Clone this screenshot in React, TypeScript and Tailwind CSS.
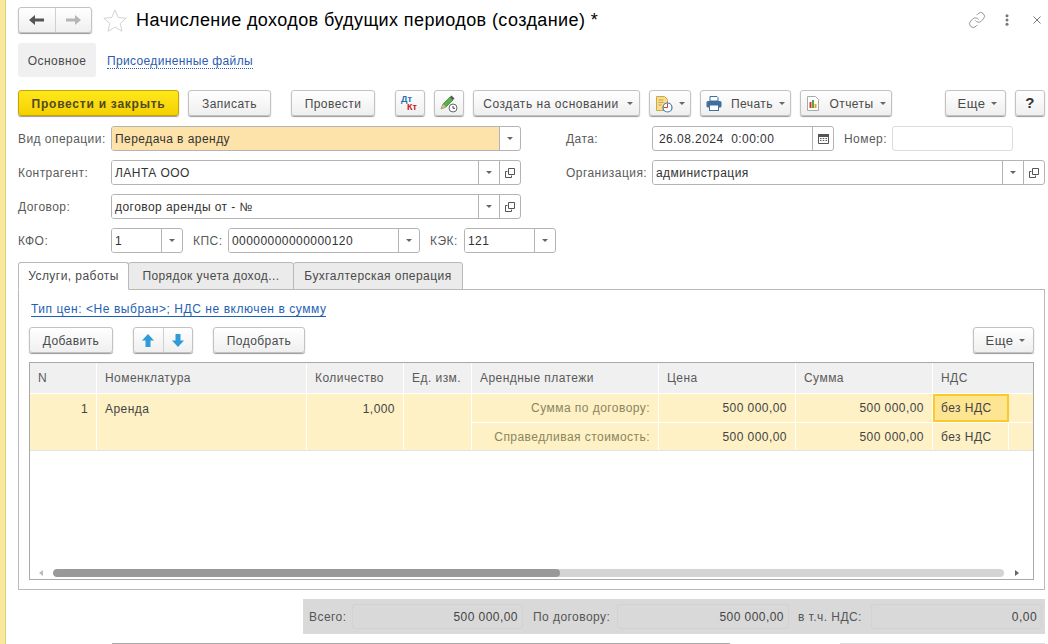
import type { ReactNode } from 'react';
import { Link } from 'lucide-react';

const btn =
    'flex h-[26px] items-center justify-center rounded-[3px] border border-[#c2c2c2] bg-gradient-to-b from-white to-[#efefef] text-[#4a4a4a] shadow-[0_1px_1px_#9a9a9a]';

const Caret = ({ className = '' }: { className?: string }) => (
    <svg width="6" height="3" viewBox="0 0 6 3" className={className}>
        <path d="M0 0h6L3 3z" fill="#666" />
    </svg>
);

const OpenIcon = () => (
    <svg width="10" height="10" viewBox="0 0 10 10" fill="none" stroke="#555">
        <path d="M3.500.5h6v6h-6z" />
        <path d="M2.500 3.500h-2v6h6v-2" />
    </svg>
);

function Btn({ w, children, caret, className = '' }: { w: string; children: ReactNode; caret?: boolean; className?: string }) {
    return (
        <div className={`${btn} ${w} ${className} shrink-0 gap-[6px] pt-[1px]`}>
            {children}
            {caret && <Caret />}
        </div>
    );
}

function Field({
    w,
    value,
    caret,
    open,
    bg = 'bg-white',
}: {
    w: string;
    value: string;
    caret?: boolean;
    open?: boolean;
    bg?: string;
}) {
    return (
        <div className={`flex h-[25px] shrink-0 overflow-hidden rounded-[3px] border border-[#b4b4b4] bg-white ${w}`}>
            <div className={`flex flex-1 items-center pl-[3px] text-[#333] ${bg}`}>{value}</div>
            {caret && (
                <div className="flex w-[21px] items-center justify-center border-l border-[#b4b4b4]">
                    <Caret />
                </div>
            )}
            {open && (
                <div className="flex w-[21px] items-center justify-center border-l border-[#b4b4b4]">
                    <OpenIcon />
                </div>
            )}
        </div>
    );
}

const Label = ({ w, children }: { w: string; children: ReactNode }) => (
    <div className={`flex h-[25px] shrink-0 items-center text-[#5a5a5a] ${w}`}>{children}</div>
);

const headers = ['N', 'Номенклатура', 'Количество', 'Ед. изм.', 'Арендные платежи', 'Цена', 'Сумма', 'НДС'];
const rowBg = 'bg-[#fdf1c5]';

function Tab({ w, active, children }: { w: string; active?: boolean; children: ReactNode }) {
    return (
        <div
            className={`flex h-[28px] shrink-0 items-center justify-center rounded-t-[3px] border border-[#b9b9b9] ${w} ${
                active ? 'z-10 border-b-white bg-white text-[#4a4a4a]' : 'ml-[-1px] bg-[#ebebeb] text-[#4a4a4a]'
            }`}
        >
            {children}
        </div>
    );
}

function Total({ label, labelW, w, value }: { label: string; labelW: string; w: string; value: string }) {
    return (
        <>
            <div className={`shrink-0 text-[#555] ${labelW}`}>{label}</div>
            <div className={`flex h-[25px] shrink-0 items-center justify-end rounded-[3px] border border-[#d2d2d2] pr-[4px] text-[#444] ${w}`}>
                {value}
            </div>
        </>
    );
}

export default function App() {
    return (
        <div className="flex h-[644px] w-[1048px] overflow-hidden bg-white text-[12px] tracking-[0.45px] [font-family:'Liberation_Sans',Arial,sans-serif]">
            <div className="w-[6px] shrink-0 border-r border-[#e0cf80] bg-[#fbe99b]" />
            <div className="flex w-[1039px] shrink-0 flex-col pl-[12px] pt-[8px]">
                {/* header */}
                <div className="flex h-[24px] items-center">
                    <div className={`${btn} h-[24px] w-[74px]`}>
                        <div className="flex h-full flex-1 items-center justify-center border-r border-[#d0d0d0]">
                            <svg width="15" height="10" viewBox="0 0 15 10">
                                <path d="M0 5l6-5v3.500h9v3H6V10z" fill="#555" />
                            </svg>
                        </div>
                        <div className="flex h-full flex-1 items-center justify-center">
                            <svg width="15" height="10" viewBox="0 0 15 10">
                                <path d="M15 5L9 0v3.500H0v3h9V10z" fill="#b5b5b5" />
                            </svg>
                        </div>
                    </div>
                    <svg width="24" height="23" viewBox="0 0 24 23" className="ml-[11px]" fill="none" stroke="#d2d2d2">
                        <path d="M12 1l3.200 7.500 8 .700-6 5.300 1.800 7.800-7-4.200-7 4.200 1.800-7.800-6-5.300 8-.700z" />
                    </svg>
                    <div className="ml-[9px] pt-[1px] text-[18px] tracking-[0.4px] text-black">Начисление доходов будущих периодов (создание) *</div>
                    <div className="ml-auto flex items-center">
                        <Link size={18} strokeWidth={1} color="#777" />
                        <svg width="4" height="12" viewBox="0 0 4 12" className="ml-[19px]">
                            <circle cx="2" cy="1.800" r="1.500" fill="#777" />
                            <circle cx="2" cy="6" r="1.500" fill="#777" />
                            <circle cx="2" cy="10.200" r="1.500" fill="#777" />
                        </svg>
                        <svg width="8" height="8" viewBox="0 0 8 8" className="mb-[1px] ml-[24px] mr-[4px]" stroke="#777">
                            <path d="M.5.500l7 7M7.500.500l-7 7" />
                        </svg>
                    </div>
                </div>

                {/* page tabs */}
                <div className="mt-[11px] flex h-[34px] items-center">
                    <div className="flex h-full w-[78px] items-center justify-center rounded-[3px] bg-[#f0f0f0] pt-[1px] text-[#4a4a4a]">Основное</div>
                    <div className="ml-[11px] mt-[2px] border-b border-dotted border-[#2a5db0] leading-[14px] tracking-[0.35px] text-[#2a5db0]">Присоединенные файлы</div>
                </div>

                {/* command bar */}
                <div className="mt-[13px] flex h-[26px] items-center">
                    <div className="flex h-[26px] w-[161px] shrink-0 items-center justify-center rounded-[3px] border border-[#c4a600] bg-gradient-to-b from-[#ffe81a] to-[#f6d000] pt-[1px] font-bold tracking-[0.75px] text-[#4f4a20] shadow-[0_1px_1px_#9a9a9a]">
                        Провести и закрыть
                    </div>
                    <Btn w="w-[83px]" className="ml-[9px]">Записать</Btn>
                    <Btn w="w-[84px]" className="ml-[20px]">Провести</Btn>
                    <Btn w="w-[30px]" className="ml-[20px]">
                        <div className="relative h-[18px] w-[20px] text-[9px] font-bold leading-[9px] tracking-normal">
                            <span className="absolute left-[1px] top-0 text-[#2a6fb0]">Дт</span>
                            <span className="absolute left-[7px] top-[8px] text-[#c4161c]">Кт</span>
                        </div>
                    </Btn>
                    <Btn w="w-[30px]" className="ml-[9px]">
                        <svg width="18" height="18" viewBox="0 0 18 18">
                            <path d="M1 14l2-5 7-7 3 3-7 7z" fill="#58b04a" stroke="#3c7a34" strokeWidth="0.700" />
                            <path d="M1 14l2-5 3 3z" fill="#d9b98a" />
                            <path d="M10 2l1.500-1.500 3 3L13 5z" fill="#555" />
                            <circle cx="13" cy="13" r="4" fill="#fff" stroke="#667" />
                            <path d="M13 11v2.300h2" fill="none" stroke="#444" />
                        </svg>
                    </Btn>
                    <Btn w="w-[167px]" caret className="ml-[9px] !gap-[8px] pl-[3px] tracking-[0.55px]">Создать на основании</Btn>
                    <Btn w="w-[42px]" caret className="ml-[9px]">
                        <svg width="18" height="18" viewBox="0 0 18 18">
                            <path d="M1.500 1.500h8l3 3v11h-11z" fill="#f6dc8c" stroke="#cda94e" />
                            <path d="M3.500 5h5M3.500 7.500h5M3.500 10h3" stroke="#c9a646" />
                            <circle cx="12.500" cy="12.500" r="4.500" fill="#fff" stroke="#3a78b5" strokeWidth="1.200" />
                            <path d="M12.500 8.500v4h-4" fill="none" stroke="#d43c3c" />
                        </svg>
                    </Btn>
                    <Btn w="w-[91px]" caret className="ml-[9px]">
                        <svg width="16" height="15" viewBox="0 0 16 15" className="mr-[3px]">
                            <path d="M4 0.500h7l1 1V5H4z" fill="#fff" stroke="#3f6f9c" />
                            <rect x="0.500" y="5" width="15" height="6.500" rx="1.500" fill="#3f6f9c" />
                            <rect x="3.500" y="9" width="9" height="5.500" fill="#fff" stroke="#3f6f9c" />
                        </svg>
                        Печать
                    </Btn>
                    <Btn w="w-[92px]" caret className="ml-[9px]">
                        <svg width="14" height="15" viewBox="0 0 14 15" className="mr-[3px]">
                            <path d="M1.500.500h8l3 3v11h-11z" fill="#fff" stroke="#a9a9a9" />
                            <rect x="3.500" y="6" width="2" height="6" fill="#d8352a" />
                            <rect x="6" y="4" width="2" height="8" fill="#5aa63c" />
                            <rect x="8.500" y="8" width="2" height="4" fill="#e0a526" />
                        </svg>
                        Отчеты
                    </Btn>
                    <Btn w="w-[61px]" caret className="ml-[53px] pl-[4px] text-[13px]">Еще</Btn>
                    <Btn w="w-[30px]" className="ml-[9px] text-[15px] font-bold text-[#333]">?</Btn>
                </div>

                {/* form */}
                <div className="mt-[10px] flex h-[25px]">
                    <Label w="w-[93px]">Вид операции:</Label>
                    <Field w="w-[410px]" value="Передача в аренду" caret bg="bg-[#fde3a9]" />
                    <Label w="w-[86px] ml-[45px]">Дата:</Label>
                    <div className="flex h-[25px] w-[182px] shrink-0 overflow-hidden rounded-[3px] border border-[#b4b4b4]">
                        <div className="flex flex-1 items-center whitespace-pre pl-[6px] text-[#333]">26.08.2024  0:00:00</div>
                        <div className="flex w-[21px] items-center justify-center border-l border-[#b4b4b4]">
                            <svg width="11" height="11" viewBox="0 0 11 11">
                                <path d="M.5 1.500h10v9H.5z" fill="#fff" stroke="#555" />
                                <path d="M0 1h11v3H0z" fill="#555" />
                                <path d="M2 5.500h1.500M4.750 5.500h1.500M7.500 5.500H9M2 7.500h1.500M4.750 7.500h1.500M7.500 7.500H9" stroke="#555" />
                            </svg>
                        </div>
                    </div>
                    <Label w="w-[48px] ml-[10px]">Номер:</Label>
                    <div className="h-[25px] w-[121px] rounded-[3px] border border-[#dcdcdc]" />
                </div>
                <div className="mt-[9px] flex h-[25px]">
                    <Label w="w-[93px]">Контрагент:</Label>
                    <Field w="w-[410px]" value="ЛАНТА ООО" caret open />
                    <Label w="w-[86px] ml-[45px]">Организация:</Label>
                    <Field w="w-[393px]" value="администрация" caret open />
                </div>
                <div className="mt-[9px] flex h-[25px]">
                    <Label w="w-[93px]">Договор:</Label>
                    <Field w="w-[410px]" value="договор аренды от - №" caret open />
                </div>
                <div className="mt-[9px] flex h-[25px]">
                    <Label w="w-[93px]">КФО:</Label>
                    <Field w="w-[72px]" value="1" caret />
                    <Label w="w-[35px] ml-[10px]">КПС:</Label>
                    <Field w="w-[192px]" value="00000000000000120" caret />
                    <Label w="w-[34px] ml-[10px]">КЭК:</Label>
                    <Field w="w-[92px]" value="121" caret />
                </div>

                {/* tabs */}
                <div className="mt-[9px] flex h-[27px] items-start">
                    <Tab w="w-[111px]" active>Услуги, работы</Tab>
                    <Tab w="w-[166px]">Порядок учета доход...</Tab>
                    <Tab w="w-[170px]">Бухгалтерская операция</Tab>
                </div>
                <div className="flex h-[301px] flex-col border border-[#b9b9b9] px-[10px]">
                    <div className="ml-[2px] mt-[13px] h-[14px] self-start border-b border-[#1f5fb4] leading-[13px] tracking-[0.55px] text-[#1f5fb4]">
                        Тип цен: &lt;Не выбран&gt;; НДС не включен в сумму
                    </div>
                    <div className="mt-[10px] flex h-[26px]">
                        <Btn w="w-[84px]">Добавить</Btn>
                        <div className={`${btn} ml-[20px] w-[60px] shrink-0`}>
                            <div className="flex h-full flex-1 items-center justify-center border-r border-[#d0d0d0]">
                                <svg width="12" height="13" viewBox="0 0 12 13">
                                    <path d="M6 0l6 6.500H8.500V13h-5V6.500H0z" fill="#2f9bd8" />
                                </svg>
                            </div>
                            <div className="flex h-full flex-1 items-center justify-center">
                                <svg width="12" height="13" viewBox="0 0 12 13">
                                    <path d="M6 13L0 6.500h3.500V0h5v6.500H12z" fill="#2f9bd8" />
                                </svg>
                            </div>
                        </div>
                        <Btn w="w-[92px]" className="ml-[20px]">Подобрать</Btn>
                        <Btn w="w-[61px]" caret className="ml-auto pl-[4px] text-[13px]">Еще</Btn>
                    </div>

                    {/* table */}
                    <div className="mt-[9px] flex h-[218px] flex-col border border-[#a9a9a9]">
                        <div className="grid grid-cols-[66px_209px_96px_67px_186px_136px_136px_100px] grid-rows-[30px_28px_27px] gap-[1px] border-b border-[#e2e2e2] bg-white text-[#5a5a5a]">
                            {headers.map((h) => (
                                <div key={h} className="flex items-center bg-[#f0f0f0] pl-[8px]">{h}</div>
                            ))}
                            <div className={`row-span-2 ${rowBg} pr-[8px] pt-[6px] text-right text-[#444]`}>1</div>
                            <div className={`row-span-2 ${rowBg} pl-[8px] pt-[6px] text-[#444]`}>Аренда</div>
                            <div className={`row-span-2 ${rowBg} pr-[8px] pt-[6px] text-right text-[#444]`}>1,000</div>
                            <div className={`row-span-2 ${rowBg}`} />
                            <div className={`${rowBg} flex items-center justify-end pr-[8px] text-[#8b8560]`}>Сумма по договору:</div>
                            <div className={`${rowBg} flex items-center justify-end pr-[8px] text-[#444]`}>500 000,00</div>
                            <div className={`${rowBg} flex items-center justify-end pr-[8px] text-[#444]`}>500 000,00</div>
                            <div className={`${rowBg} flex`}>
                                <div className="flex w-[76px] items-center border-2 border-[#fbc92c] bg-[#fee592] pl-[6px] text-[#444]">без НДС</div>
                            </div>
                            <div className={`${rowBg} flex items-center justify-end pr-[8px] text-[#8b8560]`}>Справедливая стоимость:</div>
                            <div className={`${rowBg} flex items-center justify-end pr-[8px] text-[#444]`}>500 000,00</div>
                            <div className={`${rowBg} flex items-center justify-end pr-[8px] text-[#444]`}>500 000,00</div>
                            <div className={`${rowBg} flex`}>
                                <div className="flex w-[76px] items-center border-r border-white pl-[8px] text-[#444]">без НДС</div>
                            </div>
                        </div>
                        <div className="mb-[2px] mt-auto flex h-[9px] items-center">
                            <svg width="4" height="6" viewBox="0 0 4 6" className="ml-[9px]">
                                <path d="M4 0v6L0 3z" fill="#bbb" />
                            </svg>
                            <div className="ml-[10px] h-[8px] w-[951px] overflow-hidden rounded-[4px] bg-[#d4d4d4]">
                                <div className="h-full w-[507px] rounded-[4px] bg-[#999]" />
                            </div>
                            <svg width="4" height="6" viewBox="0 0 4 6" className="ml-[11px]">
                                <path d="M0 0v6l4-3z" fill="#666" />
                            </svg>
                        </div>
                    </div>
                </div>

                {/* totals */}
                <div className="ml-[285px] mt-[9px] flex h-[35px] shrink-0 items-center bg-[#d9d9d9] pl-[6px]">
                    <Total label="Всего:" labelW="w-[43px]" w="w-[171px]" value="500 000,00" />
                    <Total label="По договору:" labelW="w-[84px] ml-[10px]" w="w-[172px]" value="500 000,00" />
                    <Total label="в т.ч. НДС:" labelW="w-[73px] ml-[9px]" w="w-[171px]" value="0,00" />
                </div>

                <div className="mt-[9px] flex h-[1px] shrink-0">
                    <div className="ml-[94px] w-[618px] bg-[#a9a9a9]" />
                    <div className="ml-[110px] w-[205px] bg-[#dcdcdc]" />
                </div>
            </div>
        </div>
    );
}
